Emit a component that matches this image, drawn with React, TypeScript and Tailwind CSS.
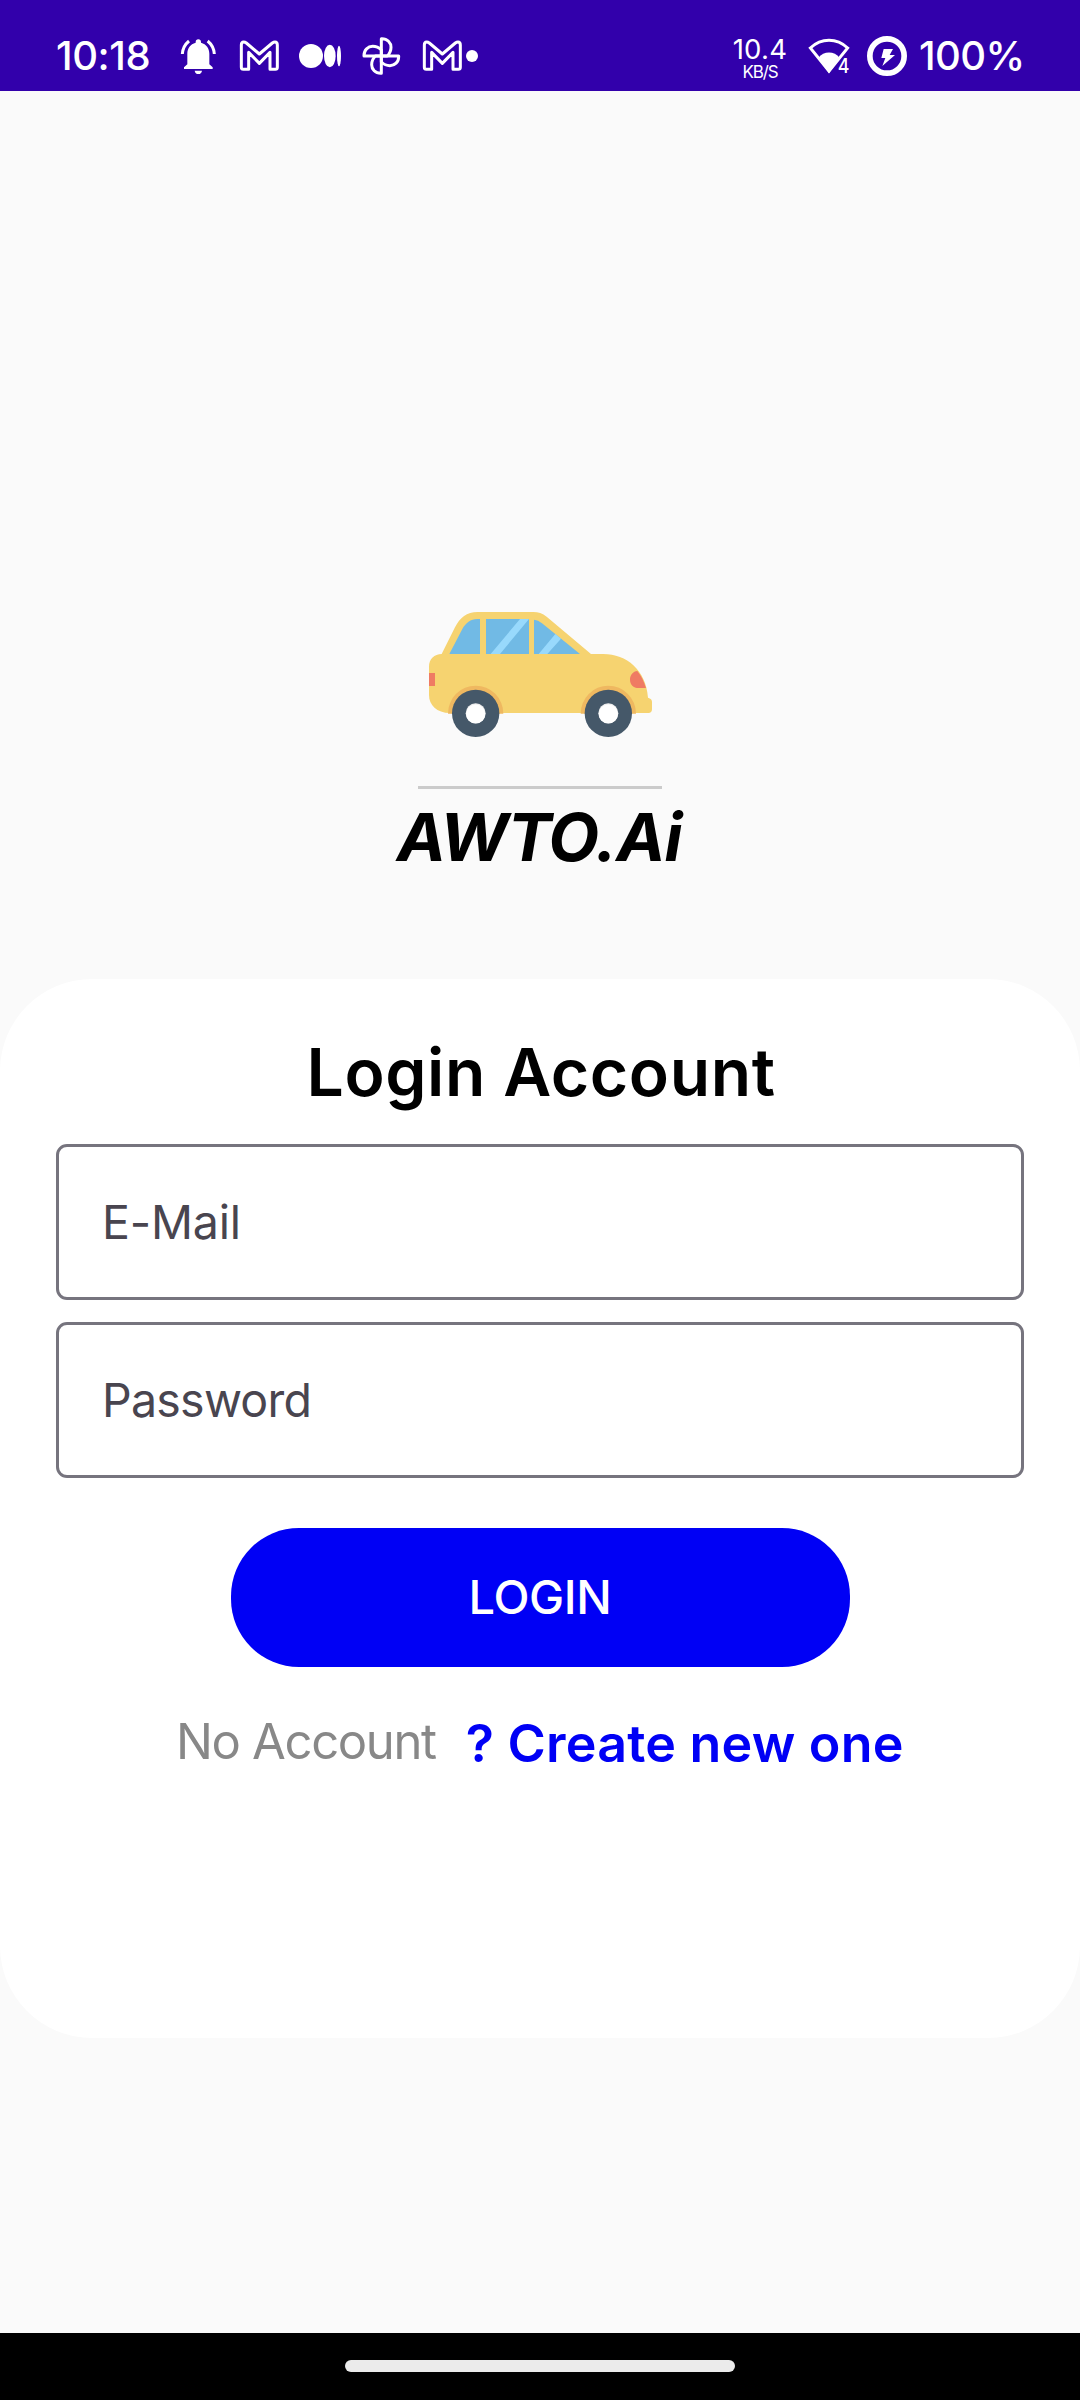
import type { ReactNode } from 'react';

function StatusIcon({ box, className, children }: { box: string; className: string; children: ReactNode }) {
  return (
    <svg viewBox={box} className={`h-[42px] shrink-0 ${className}`} fill="white">
      {children}
    </svg>
  );
}

const envelope =
  'M463 142V75Q463 66 470 66Q474 66 478 69L517 102L556 69Q560 66 564 66Q571 66 571 75V142Q571 148 565 148H549V97L517 130L485 97V148H469Q463 148 463 142Z';

function StatusBar() {
  return (
    <header className="flex h-[91px] items-start bg-[#3200ab] pt-[35px] text-white">
      <div className="ml-14 w-[122px] text-[40px] leading-[41px] font-medium tracking-[-0.4px]">10:18</div>
      <StatusIcon box="414 45 126 126" className="w-[42px]">
        <path d="M475 58c5 0 8 3 8 8v2c16 4 25 17 25 33v32l10 9v5h-86v-5l10-9v-32c0-16 9-29 25-33v-2c0-5 3-8 8-8zM464 152h22c-1 7-5 10-11 10s-10-3-11-10z" />
        <path d="M427 102c1-16 8-29 20-39M523 102c-1-16-8-29-20-39" fill="none" stroke="white" strokeWidth="9" />
      </StatusIcon>
      <StatusIcon box="453 45 126 126" className="ml-[18px] w-[42px]">
        <path d={envelope} fill="none" stroke="white" strokeWidth="9" strokeLinejoin="round" />
      </StatusIcon>
      <StatusIcon box="84 45 135 126" className="ml-[18px] w-[45px]">
        <ellipse cx="123" cy="108" rx="36" ry="36" />
        <ellipse cx="179.5" cy="108" rx="17.5" ry="34" />
        <ellipse cx="207" cy="108" rx="6" ry="31" />
      </StatusIcon>
      <StatusIcon box="273 45 126 126" className="ml-[18px] w-[42px]">
        <g fill="none" stroke="white" strokeWidth="9" strokeLinejoin="round">
          {[0, 90, 180, 270].map((angle) => (
            <path
              key={angle}
              d="M334 108V56h2c16 0 27 12 27 26 0 11-4 19-11 26z"
              transform={`rotate(${angle} 334 108)`}
            />
          ))}
        </g>
      </StatusIcon>
      <StatusIcon box="453 45 180 126" className="ml-[18px] w-[60px]">
        <path d={envelope} fill="none" stroke="white" strokeWidth="9" strokeLinejoin="round" />
        <circle cx="606" cy="108" r="18" />
      </StatusIcon>

      <div className="ml-auto flex w-[60px] flex-col items-center">
        <div className="pt-[1px] text-[27.5px] leading-[27px] tracking-[0.3px]">10.4</div>
        <div className="text-[17px] leading-[18px] tracking-[-1.1px]">KB/S</div>
      </div>
      <StatusIcon box="261 45 135 126" className="ml-[17px] w-[45px]">
        <path d="M271 84C304 53 350 53 383 84L327 153Z" fill="none" stroke="white" strokeWidth="9" />
        <path d="M295 114C311 92 343 92 359 114L327 160Z" />
        <text
          x="353"
          y="158"
          fontSize="60"
          fontWeight="500"
          stroke="#3200ab"
          strokeWidth="12"
          style={{ paintOrder: 'stroke' }}
          textLength="35"
          lengthAdjust="spacingAndGlyphs"
        >
          4
        </text>
      </StatusIcon>
      <StatusIcon box="438 45 126 126" className="ml-[14px] w-[42px]">
        <circle cx="501" cy="108" r="51.5" fill="none" stroke="white" strokeWidth="17" />
        <path d="M491 87H519L509 105H525L487 138L496 114H484Z" />
      </StatusIcon>
      <div className="ml-[11px] w-[161px] text-[40px] leading-[41px] font-medium tracking-[-0.6px]">100%</div>
    </header>
  );
}

function Wheel({ cx }: { cx: number }) {
  return (
    <g>
      <path d={`M${cx - 83} 371a83 84 0 0 1 166 0z`} fill="#efb860" />
      <circle cx={cx} cy="370" r="71" fill="#455869" />
      <circle cx={cx} cy="370" r="30" fill="#efefef" />
      <circle cx={cx} cy="372" r="28.5" fill="white" />
    </g>
  );
}

function Car() {
  return (
    <svg viewBox="0 0 840 510" className="h-[170px] w-[280px]">
      <path
        d="M87 230C87 207 103 192 125 192L165 112C180 83 200 66 233 66H400C415 66 427 70 440 80L573 192H610C680 192 738 240 744 323Q756 326 756 336V358Q756 369 745 369H150C110 369 87 345 87 315Z"
        fill="#f6d370"
      />
      <path
        d="M148 192L187 117C197 99 212 87 232 87H240V192ZM258 87H387V192H258ZM402 192V89C411 90 418 93 426 100L540 192Z"
        fill="#71bae5"
      />
      <path d="M360 87H387L300 192H272ZM466 132L483 146L442 192H416Z" fill="#98d9fc" />
      <path
        d="M87 249H105V288H87ZM712 243C724 258 732 274 738 294H716C700 294 690 283 690 269C690 255 699 244 712 243Z"
        fill="#ef7b63"
      />
      <Wheel cx={227} />
      <Wheel cx={625} />
    </svg>
  );
}

function Field({ type, label }: { type: string; label: string }) {
  return (
    <input
      type={type}
      placeholder={label}
      className={`h-[156px] w-[968px] rounded-[11px] border-3 border-[#76747e] bg-white pl-[43px] text-[46.5px] text-[#49454f] placeholder:text-[#49454f] placeholder:opacity-100 ${
        type === 'password' ? 'tracking-[-0.75px]' : 'tracking-[-0.2px]'
      }`}
    />
  );
}

export default function App() {
  return (
    <div className="flex h-[2400px] w-[1080px] flex-col overflow-hidden bg-[#fafafa] font-['Inter',sans-serif]">
      <StatusBar />
      <main className="flex flex-1 flex-col items-center">
        <div className="mt-[499px]">
          <Car />
        </div>
        <div className="mt-[26px] h-[3px] w-[244px] bg-[#cbcbcb]" />
        <h1 className="mt-2 pr-[2px] text-[66px] leading-[80px] font-bold tracking-[-1.1px] text-black italic">AWTO.Ai</h1>
        <section className="mt-[102px] flex h-[1059px] w-full flex-col items-center rounded-[92px] bg-white">
          <h2 className="mt-[53px] pl-[2px] text-[66px] leading-[80px] font-semibold tracking-[0.6px] text-black">
            Login Account
          </h2>
          <div className="mt-8 flex flex-col gap-[22px]">
            <Field type="email" label="E-Mail" />
            <Field type="password" label="Password" />
          </div>
          <button className="mt-[50px] h-[139px] w-[619px] rounded-[68px] bg-[#0000f5] pb-[2px] text-[47px] leading-none font-medium tracking-[-0.4px] text-white">
            LOGIN
          </button>
          <div className="mt-[45px] flex w-full items-start pl-[176px]">
            <span className="text-[49px] leading-[60px] tracking-[-1.35px] text-[#888]">No Account</span>
            <a className="ml-[30px] pt-[2px] text-[52px] leading-[60px] font-semibold tracking-[0.2px] whitespace-nowrap text-[#0000f5]">
              ? Create new one
            </a>
          </div>
        </section>
      </main>
      <nav className="flex h-[67px] justify-center bg-black pt-[27px]">
        <div className="mr-px h-3 w-[390px] rounded-full bg-[#ebebeb]" />
      </nav>
    </div>
  );
}
